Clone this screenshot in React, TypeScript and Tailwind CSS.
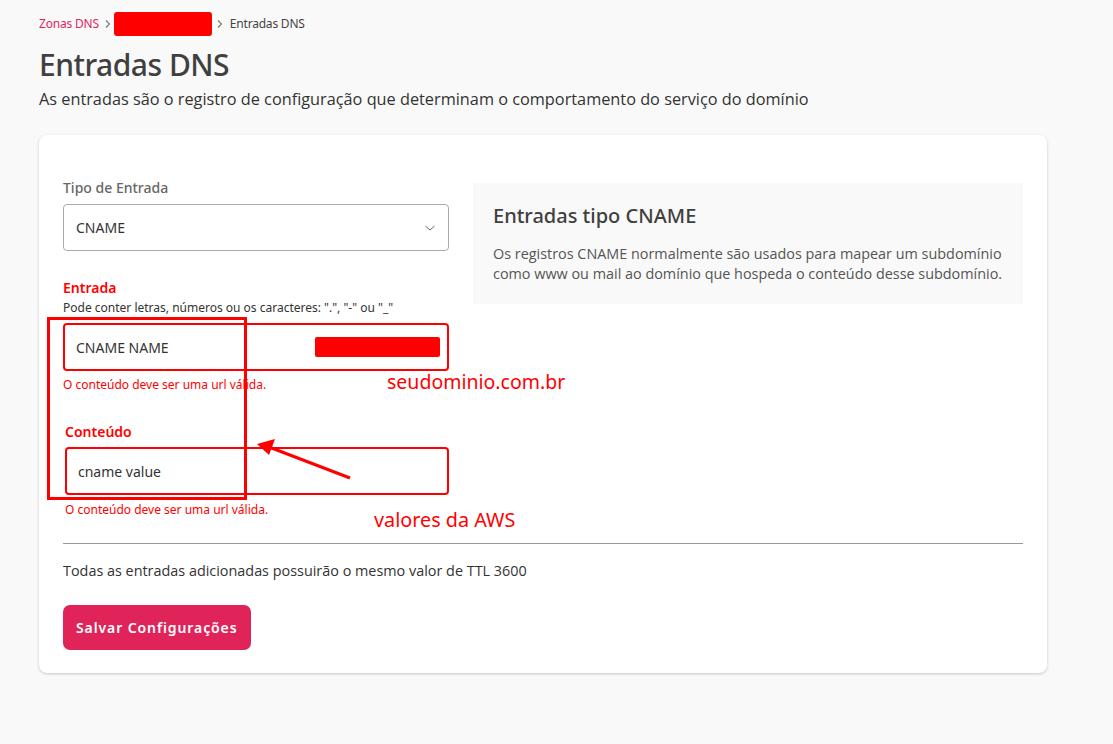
import React from "react";

const ub = { fontFamily: "'Noto Sans', 'Open Sans', sans-serif" };

export default function App() {
  return (
    <div
      className="min-h-[744px] w-full bg-[#f9f9f9] pl-[39px] pt-[12px] text-[#333]"
      style={{ fontFamily: "'Open Sans', 'Noto Sans', sans-serif" }}
    >
      {/* Breadcrumb */}
      <div className="flex h-[24px] items-center text-[12px] tracking-[-0.2px]" style={ub}>
        <span className="text-[#e0245e]">Zonas DNS</span>
        <svg className="ml-[5px] mr-[2px]" width="8" height="10" viewBox="0 0 8 10">
          <path d="M2 1.5 L5.5 5 L2 8.5" fill="none" stroke="#777" strokeWidth="1.1" />
        </svg>
        <span className="h-[24px] w-[98px] rounded-[3px] bg-[#ff0000]" />
        <svg className="ml-[4px] mr-[6px]" width="8" height="10" viewBox="0 0 8 10">
          <path d="M2 1.5 L5.5 5 L2 8.5" fill="none" stroke="#777" strokeWidth="1.1" />
        </svg>
        <span className="text-[#444]">Entradas DNS</span>
      </div>

      <h1
        className="mt-[11px] text-[30px] font-medium leading-[36px] tracking-[-0.5px] text-[#404040]"
        style={ub}
      >
        Entradas DNS
      </h1>
      <p className="mt-[5px] text-[16.3px] leading-[22px] text-[#333]">
        As entradas são o registro de configuração que determinam o comportamento do serviço do domínio
      </p>

      {/* Card */}
      <div className="relative mt-[25px] w-[1008px] rounded-[8px] bg-white px-[24px] pb-[23px] pt-[48px] shadow-[0_1px_3px_rgba(0,0,0,0.2)]">
        <div className="flex gap-[24px]">
          {/* Left column */}
          <div className="w-[386px]">
            <label className="-mt-[4px] block text-[14px] font-medium leading-[18px] text-[#666]" style={ub}>
              Tipo de Entrada
            </label>
            <div className="mt-[7px] flex h-[47px] items-center justify-between rounded-[4px] border border-[#aaa] pl-[12px] pr-[12px]">
              <span className="text-[14px] text-[#333]" style={ub}>CNAME</span>
              <svg width="12" height="8" viewBox="0 0 12 8">
                <path d="M1.5 2 L6 6 L10.5 2" fill="none" stroke="#666" strokeWidth="1" />
              </svg>
            </div>

            <label className="mt-[28px] block text-[14px] font-semibold leading-[18px] text-[#ff0000]" style={ub}>
              Entrada
            </label>
            <p className="mt-[3px] text-[12px] leading-[16px] text-[#333]" style={ub}>
              Pode conter letras, números ou os caracteres: ".", "-" ou "_"
            </p>
            <div className="mt-[7px] flex h-[48px] items-center justify-between rounded-[4px] border-2 border-[#ff0000] pl-[11px] pr-[7px]">
              <span className="text-[14px] text-[#333]" style={ub}>CNAME NAME</span>
              <span className="h-[20px] w-[125px] rounded-[2px] bg-[#ff0000]" />
            </div>
            <p className="mt-[6px] text-[12px] leading-[16px] text-[#ff0000]" style={ub}>
              O conteúdo deve ser uma url válida.
            </p>

            <div className="pl-[2px]">
              <label className="mt-[30px] block text-[14px] font-semibold leading-[18px] text-[#ff0000]" style={ub}>
                Conteúdo
              </label>
              <div className="mt-[6px] flex h-[48px] items-center rounded-[4px] border-2 border-[#ff0000] pl-[11px]">
                <span className="text-[14px] text-[#333]" style={ub}>cname value</span>
              </div>
              <p className="mt-[7px] text-[12px] leading-[16px] text-[#ff0000]" style={ub}>
                O conteúdo deve ser uma url válida.
              </p>
            </div>
          </div>

          {/* Right column */}
          <div className="w-[550px]">
            <div className="h-[121px] bg-[#f9f9f9] px-[20px] pt-[20px]">
              <h2 className="text-[20px] font-medium leading-[26px] text-[#404040]" style={ub}>
                Entradas tipo CNAME
              </h2>
              <p className="mt-[15px] text-[14.4px] leading-[20px] text-[#555]">
                Os registros CNAME normalmente são usados para mapear um subdomínio como www ou mail ao domínio que hospeda o conteúdo desse subdomínio.
              </p>
            </div>
          </div>
        </div>

        <div className="mt-[25px] h-px w-full bg-[#999]" />
        <p className="mt-[17px] text-[14.4px] leading-[20px] text-[#333]">
          Todas as entradas adicionadas possuirão o mesmo valor de TTL 3600
        </p>
        <button
          className="mt-[24px] h-[45px] rounded-[7px] bg-[#e0245a] px-[13px] text-[14px] font-semibold tracking-[0.9px] text-white"
          style={ub}
        >
          Salvar Configurações
        </button>

        {/* Annotations overlay */}
        <div className="pointer-events-none absolute left-[8px] top-[182px] h-[183px] w-[200px] border-[3px] border-[#ff0000]" />
        <span
          className="pointer-events-none absolute left-[348px] top-[235px] text-[19.5px] leading-[24px] text-[#ff0000]"
          style={ub}
        >
          seudominio.com.br
        </span>
        <span
          className="pointer-events-none absolute left-[335px] top-[373px] text-[19.8px] leading-[24px] text-[#ff0000]"
          style={ub}
        >
          valores da AWS
        </span>
        <svg
          className="pointer-events-none absolute left-[210px] top-[300px]"
          width="110"
          height="50"
          viewBox="0 0 110 50"
        >
          <line x1="101" y1="43" x2="20" y2="12" stroke="#ff0000" strokeWidth="3" />
          <polygon points="8,9 26,4 20,20" fill="#ff0000" />
        </svg>
      </div>
    </div>
  );
}
